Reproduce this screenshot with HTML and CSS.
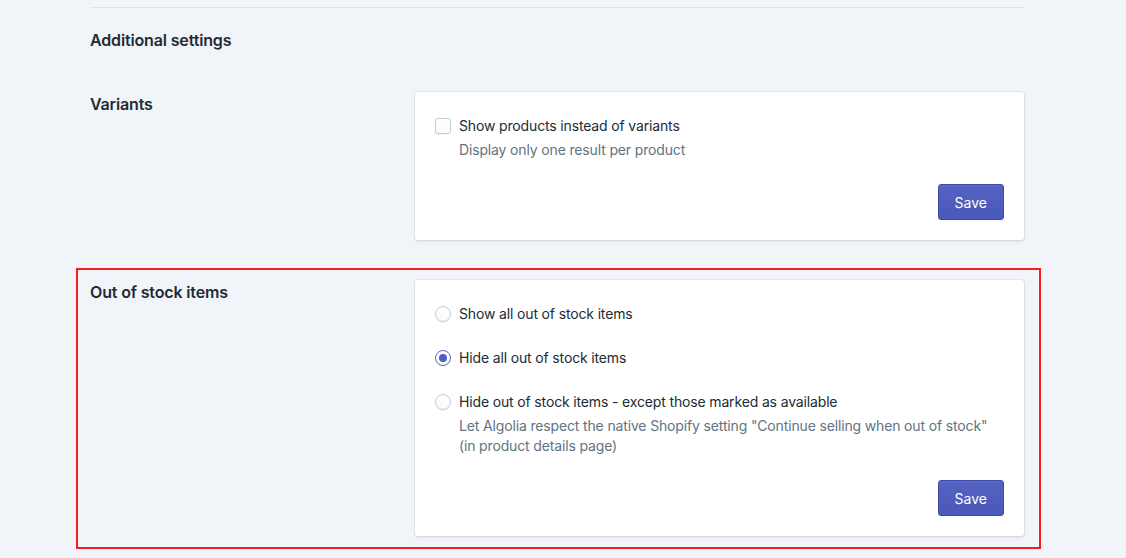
FILE: index.html
```html
<!DOCTYPE html>
<html lang="en">
<head>
    <meta charset="UTF-8">
    <title>Additional settings</title>
    <link rel="stylesheet" href="styles.css">
</head>
<body>
    <div class="page">
        <hr class="divider">
        <h2 class="page-heading">Additional settings</h2>

        <div class="layout">
            <div class="annotated">
                <div class="label">Variants</div>
                <div class="card">
                    <div class="card-body">
                        <label class="choice">
                            <span class="checkbox"></span>
                            <span>Show products instead of variants</span>
                        </label>
                        <div class="help">Display only one result per product</div>
                    </div>
                    <div class="card-footer">
                        <button class="btn-primary">Save</button>
                    </div>
                </div>
            </div>

            <div class="annotated highlight">
                <div class="label">Out of stock items</div>
                <div class="card">
                    <div class="card-body">
                        <ul class="choice-list">
                            <li>
                                <label class="choice">
                                    <span class="radio"></span>
                                    <span>Show all out of stock items</span>
                                </label>
                            </li>
                            <li>
                                <label class="choice">
                                    <span class="radio checked"></span>
                                    <span>Hide all out of stock items</span>
                                </label>
                            </li>
                            <li>
                                <label class="choice">
                                    <span class="radio"></span>
                                    <span>Hide out of stock items - except those marked as available</span>
                                </label>
                                <div class="help">Let Algolia respect the native Shopify setting "Continue selling when out of stock"<br>(in product details page)</div>
                            </li>
                        </ul>
                    </div>
                    <div class="card-footer">
                        <button class="btn-primary">Save</button>
                    </div>
                </div>
            </div>
        </div>
    </div>
</body>
</html>
```

FILE: styles.css
```css
* {
    margin: 0;
    padding: 0;
    box-sizing: border-box;
}
body {
    background-color: #f1f4f8;
    font-family: Inter, "Noto Sans", sans-serif;
    font-size: 14px;
    line-height: 20px;
    letter-spacing: -0.15px;
    color: #212b36;
}
.page {
    width: 934px;
    margin-left: 90px;
    padding-top: 7px;
}
.divider {
    border: none;
    border-top: 1px solid #dfe3e8;
}
.page-heading {
    font-size: 16px;
    font-weight: 600;
    line-height: 24px;
    margin-top: 20px;
}
.layout {
    margin-top: 40px;
}
.annotated {
    display: flex;
    margin-bottom: 40px;
}
.annotated .label {
    width: 325px;
    flex-shrink: 0;
    font-size: 16px;
    font-weight: 600;
    line-height: 24px;
}
.highlight {
    border: 2px solid #f41e1e;
    margin: -12px -17px 0 -14px;
    padding: 10px 15px 11px 12px;
}
.card {
    flex: 1;
    background: #fff;
    border-radius: 3px;
    box-shadow: 0 0 0 1px rgba(63, 63, 68, 0.05), 0 1px 3px 0 rgba(63, 63, 68, 0.15);
}
.card-body {
    padding: 20px 20px 0;
}
.card-footer {
    display: flex;
    justify-content: flex-end;
    padding: 24px 20px 20px;
}
.choice {
    display: flex;
    align-items: center;
    padding: 4px 0;
}
.checkbox,
.radio {
    width: 16px;
    height: 16px;
    margin-right: 8px;
    flex-shrink: 0;
    border: 1px solid #c4cdd5;
    background: linear-gradient(180deg, #fff, #f9fafb);
    box-shadow: 0 1px 0 0 rgba(22, 29, 37, 0.05);
}
.checkbox {
    border-radius: 3px;
}
.radio {
    border-radius: 50%;
    position: relative;
}
.radio.checked {
    border-color: #5c6ac4;
}
.radio.checked::after {
    content: "";
    position: absolute;
    top: 3px;
    left: 3px;
    width: 8px;
    height: 8px;
    border-radius: 50%;
    background: #4f5dbd;
}
.help {
    padding-left: 24px;
    color: #637381;
}
.choice-list {
    list-style: none;
}
.choice-list li + li {
    margin-top: 16px;
}
.btn-primary {
    height: 36px;
    padding: 0 16px;
    font-family: inherit;
    font-size: 14px;
    letter-spacing: 0;
    color: #fff;
    background: linear-gradient(180deg, #5462c1, #4a58b8);
    border: 1px solid #3d4aa8;
    border-radius: 3px;
    box-shadow: inset 0 1px 0 0 #5f6cc4, 0 1px 0 0 rgba(22, 29, 37, 0.05);
    cursor: pointer;
}
```
